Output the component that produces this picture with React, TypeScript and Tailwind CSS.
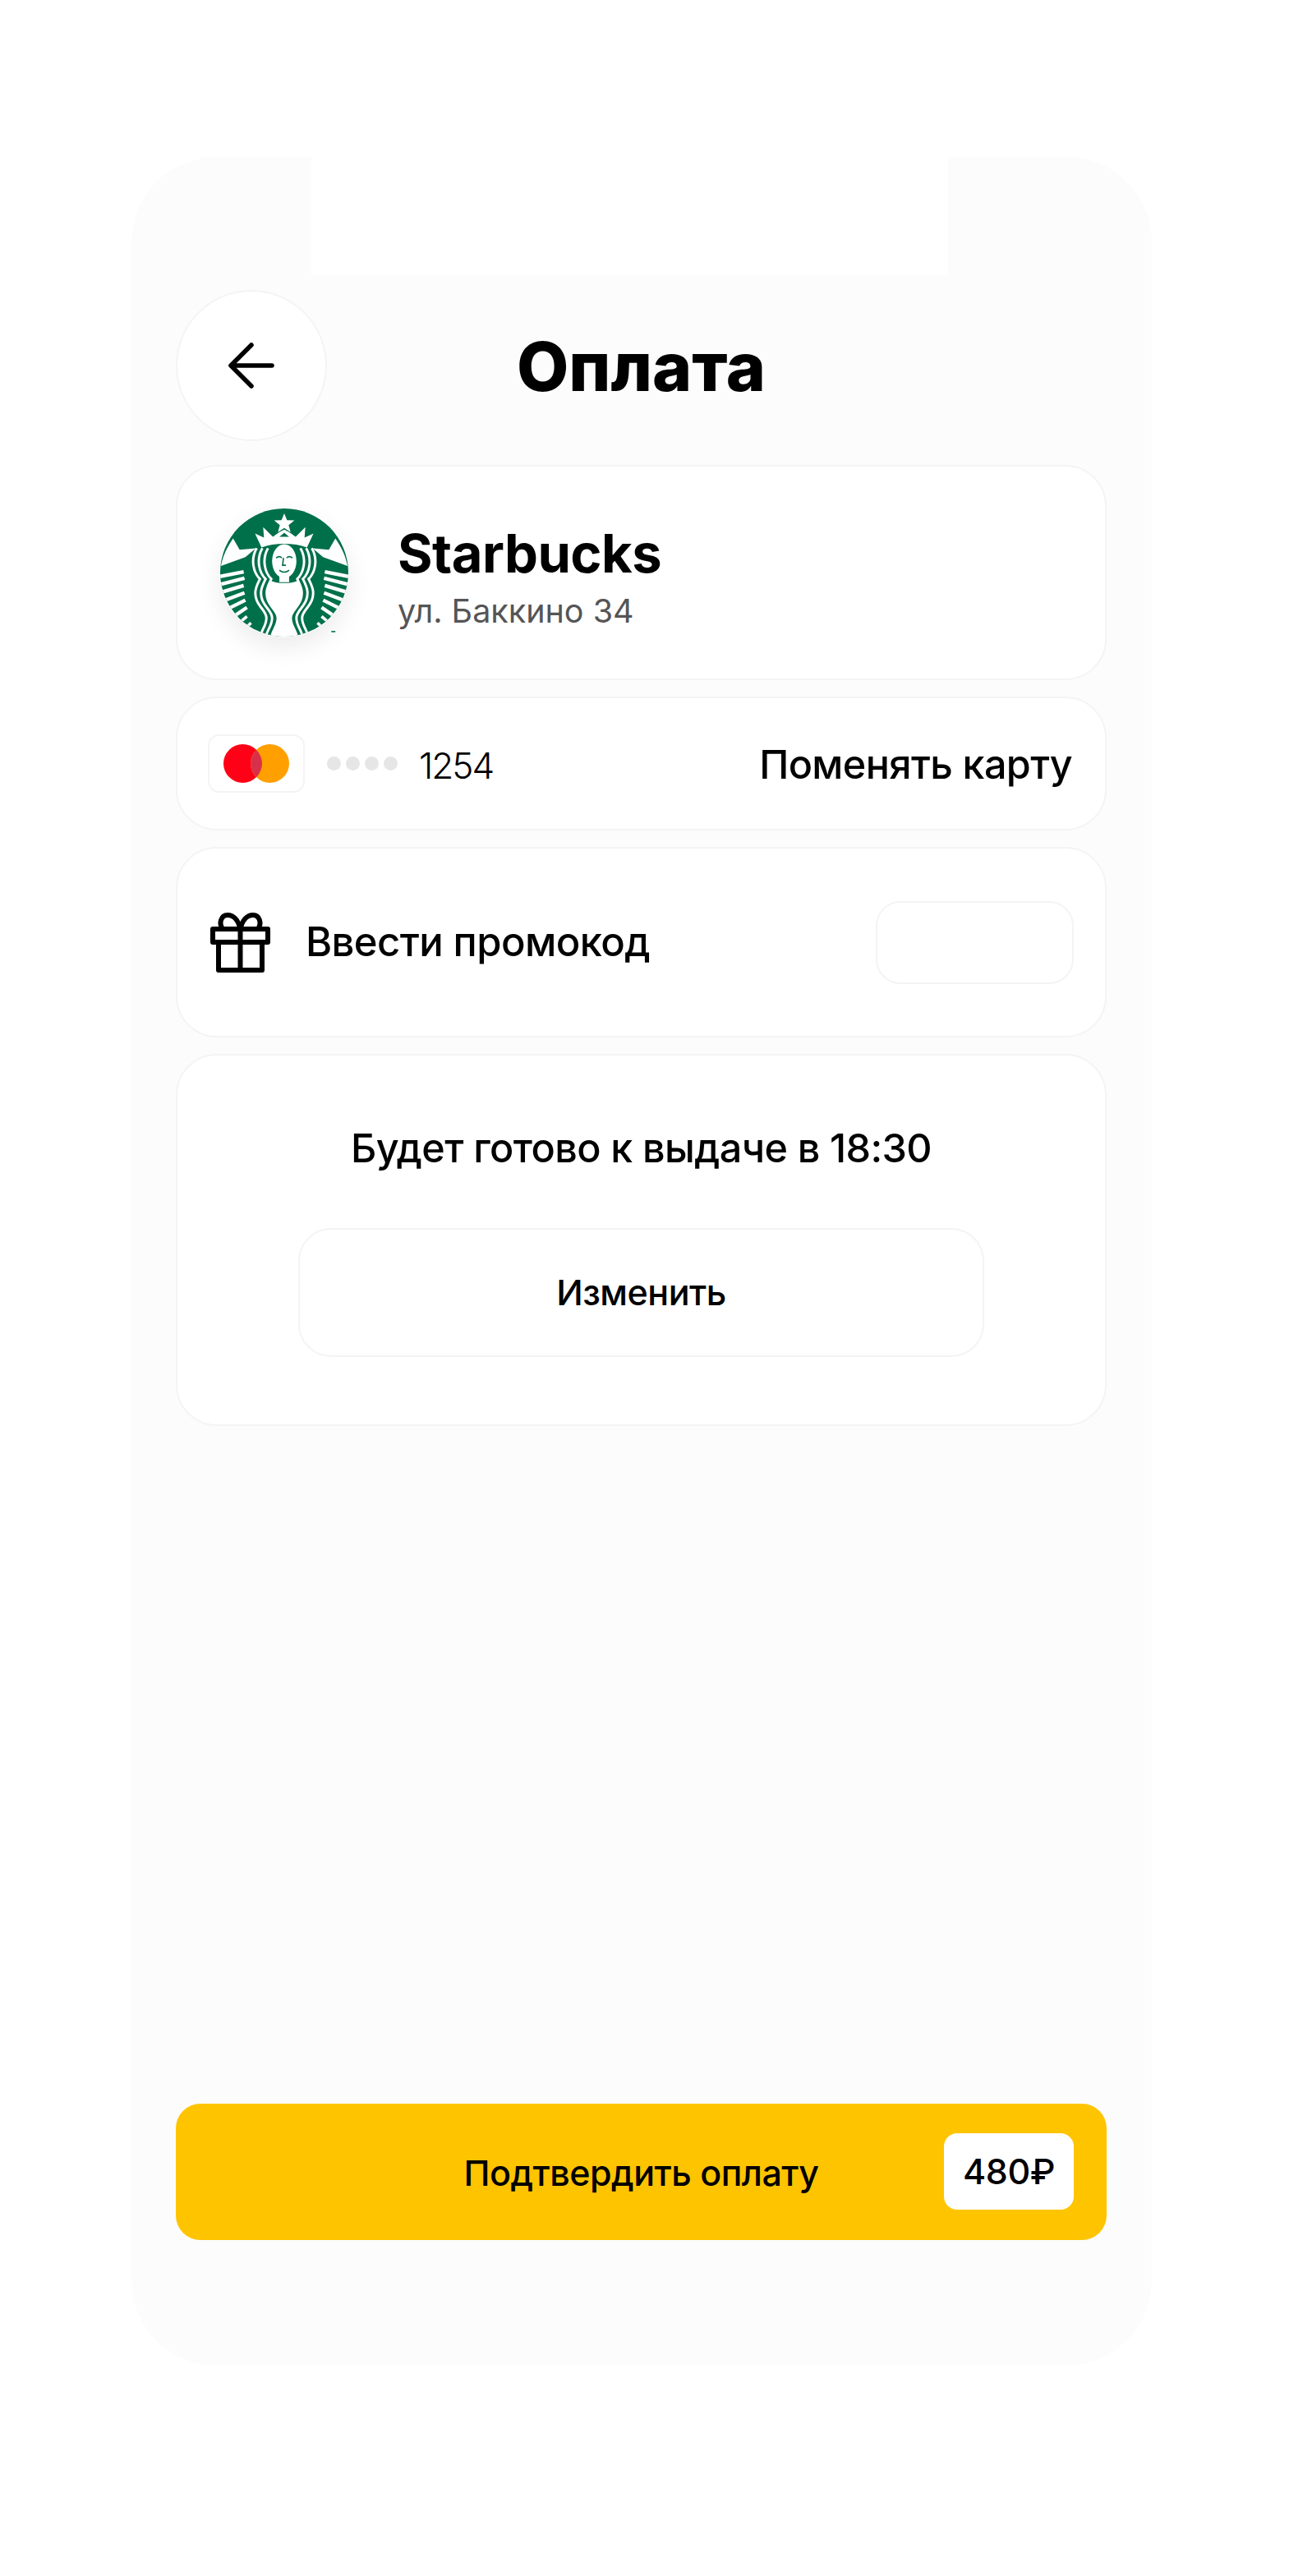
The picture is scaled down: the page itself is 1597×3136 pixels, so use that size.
const font = { fontFamily: '"Inter", "Noto Sans", sans-serif' };

function Starbucks() {
  const G = "#00704A";
  const strand = "M60 50 C52 64 56 80 64 88 C60 96 56 104 60 114 C64 124 72 128 72 136 C72 146 66 150 64 160";
  const stripes = [
    [0, 85, 30, 79],
    [0, 95, 31, 87],
    [0, 105, 30, 96],
    [2, 116, 31, 105],
    [6, 127, 32, 114],
    [12, 138, 34, 123],
  ];
  return (
    <svg viewBox="0 0 160 160" className="w-[158px] h-[158px] block">
      <defs>
        <clipPath id="sbx">
          <circle cx="80" cy="80" r="79" />
        </clipPath>
      </defs>
      <circle cx="80" cy="80" r="79" fill={G} />
      <g clipPath="url(#sbx)">
        <path d="M80 7 L83.4 15.5 L92.5 15.8 L85.4 21.4 L87.8 30 L80 25 L72.2 30 L74.6 21.4 L67.5 15.8 L76.6 15.5Z" fill="#fff" />
        <path d="M44 32 L55 37 L54 24 L66 36 L74 30 L80 27 L86 30 L94 36 L106 24 L105 37 L116 32 L108 49 C92 43 68 43 52 49Z" fill="#fff" />
        <path d="M74 36 L80 31 L86 36Z" fill={G} />
        <path d="M17 38 L25 52 L45 50 L32 61 L2 72 C4 60 10 48 17 38Z" fill="#fff" />
        <path d="M143 38 L135 52 L115 50 L128 61 L158 72 C156 60 150 48 143 38Z" fill="#fff" />
        {stripes.map(([a, b, c, d]) => (
          <g key={b} stroke="#fff" strokeWidth="4.4">
            <path d={`M${a} ${b} L${c} ${d}`} />
            <path d={`M${160 - a} ${b} L${160 - c} ${d}`} />
          </g>
        ))}
        <path d="M16 140 L38 124 L46 160 L30 160Z" fill={G} />
        <path d="M144 140 L122 124 L114 160 L130 160Z" fill={G} />
        <path d="M20 146 L34 134 M28 153 L39 142" stroke="#fff" strokeWidth="3.6" />
        <path d="M140 146 L126 134 M132 153 L121 142" stroke="#fff" strokeWidth="3.6" />
        <ellipse cx="80" cy="66" rx="15" ry="21" fill="#fff" />
        <path d="M74 82 H86 V92 H74Z" fill="#fff" />
        <path d="M64 90 C60 96 56 104 60 114 C64 124 72 128 72 136 C72 146 66 150 64 160 H96 C94 150 88 146 88 136 C88 128 96 124 100 114 C104 104 100 96 96 90 C90 94 70 94 64 90Z" fill="#fff" />
        {[0, -7, -14].map((dx) => (
          <g key={dx}>
            <path d={strand} transform={`translate(${dx} 0)`} stroke="#fff" strokeWidth="3" fill="none" />
            <path d={strand} transform={`matrix(-1 0 0 1 ${160 - dx} 0)`} stroke="#fff" strokeWidth="3" fill="none" />
          </g>
        ))}
        <path d="M70 62 Q74 59 77 62 M83 62 Q86 59 90 62 M79 62 L78 71 H82 M74 77 Q80 82 86 77" stroke={G} strokeWidth="1.7" fill="none" />
      </g>
      <rect x="138" y="152" width="5" height="1.6" fill={G} />
    </svg>
  );
}

function Gift() {
  return (
    <svg viewBox="0 0 73 73" className="w-[73px] h-[73px]" fill="none" stroke="#000" strokeWidth="6" strokeLinejoin="round">
      <rect x="3" y="20" width="67" height="16" />
      <rect x="10" y="36" width="53" height="34" />
      <path d="M36.5 20V70" />
      <path d="M36.5 20 C34 9 28 3 21 3 C13 3 10 13 15 20" />
      <path d="M36.5 20 C39 9 45 3 52 3 C60 3 63 13 58 20" />
    </svg>
  );
}

function Mastercard() {
  return (
    <svg viewBox="0 0 80 47" className="w-[80px] h-[47px]">
      <circle cx="23.5" cy="23.5" r="23.5" fill="#ff0016" />
      <circle cx="56.5" cy="23.5" r="23.5" fill="#ff9f00" />
      <path d="M40 6.8 A23.5 23.5 0 0 1 40 40.2 A23.5 23.5 0 0 1 40 6.8Z" fill="#d93049" />
    </svg>
  );
}

const card = "rounded-[50px] border-[2px] border-[#f4f4f4] bg-white";

export default function App() {
  return (
    <div className="bg-white h-[3136px] w-[1597px] pt-[191px] pl-[160px]" style={font}>
      <div className="relative w-[1242px] h-[2689px] rounded-[104px] bg-[#fcfcfc] pl-[54px] pr-[55px] flex flex-col">
        <div className="absolute left-[219px] top-0 w-[775px] h-[144px] bg-white" />
        <div className="h-[162px] shrink-0" />
        <div className="relative flex items-center h-[184px] shrink-0">
          <div className="w-[184px] h-[184px] rounded-full border-[2px] border-[#f4f4f4] bg-white flex items-center justify-center">
            <svg viewBox="0 0 56 56" className="w-[56px] h-[56px]" fill="none" stroke="#000" strokeWidth="5.5" strokeLinecap="round" strokeLinejoin="round">
              <path d="M53 28 H3 M28 3 L3 28 L28 53" />
            </svg>
          </div>
          <h1 className="absolute left-0 right-0 top-[52px] text-center text-[82px] leading-[84px] font-extrabold text-black">Оплата</h1>
        </div>
        <div className="flex flex-col gap-[20px] mt-[29px]">
          <div className={`h-[262px] ${card} flex items-center pl-[51px]`}>
            <div className="rounded-full shadow-[0_12px_30px_rgba(0,0,0,0.08)]"><Starbucks /></div>
            <div className="ml-[59px] pt-[12px] flex flex-col">
              <div className="text-[65px] leading-[70px] font-bold text-black tracking-[-0.5px]">Starbucks</div>
              <div className="text-[39.5px] leading-[48px] mt-[11px] font-normal text-[#555]">ул. Баккино 34</div>
            </div>
          </div>
          <div className={`h-[163px] ${card} flex items-center pl-[37px] pr-[40px]`}>
            <div className="w-[118px] h-[71px] rounded-[14px] border-[2px] border-[#f4f4f4] bg-white flex items-center justify-center">
              <Mastercard />
            </div>
            <div className="ml-[27px] flex gap-[6px]">
              {[0, 1, 2, 3].map((i) => <span key={i} className="w-[17px] h-[17px] rounded-full bg-[#e6e6e6]" />)}
            </div>
            <div className="ml-[26px] pt-[5px] text-[44px] font-light tracking-[-2px] text-black">1254</div>
            <div className="ml-auto pt-[3px] text-[48.5px] font-medium tracking-[-0.6px] text-black">Поменять карту</div>
          </div>
          <div className={`h-[232px] ${card} flex items-center pl-[40px] pr-[38px]`}>
            <Gift />
            <div className="ml-[43px] text-[49px] font-medium tracking-[-0.6px] text-black">Ввести промокод</div>
            <div className="ml-auto w-[241px] h-[101px] rounded-[30px] border-[2px] border-[#f4f4f4] bg-white" />
          </div>
          <div className={`h-[453px] ${card} flex flex-col items-center pt-[85px]`}>
            <div className="text-[48.5px] leading-[56px] font-medium tracking-[-0.6px] text-black">Будет готово к выдаче в 18:30</div>
            <div className="mt-[69px] w-[835px] h-[157px] rounded-[40px] border-[2px] border-[#f4f4f4] bg-white flex items-center justify-center text-[43px] font-medium tracking-[-0.5px] text-black">Изменить</div>
          </div>
        </div>
        <div className="mt-auto mb-[153px] h-[166px] rounded-[30px] bg-[#ffc400] relative flex items-center justify-center pt-[2px] text-[43px] font-medium tracking-[-0.5px] text-black">
          Подтвердить оплату
          <div className="absolute right-[40px] top-[36px] w-[158px] h-[93px] rounded-[16px] bg-white flex items-center justify-center text-[43px] font-medium tracking-[-0.5px] text-black">480₽</div>
        </div>
      </div>
    </div>
  );
}
